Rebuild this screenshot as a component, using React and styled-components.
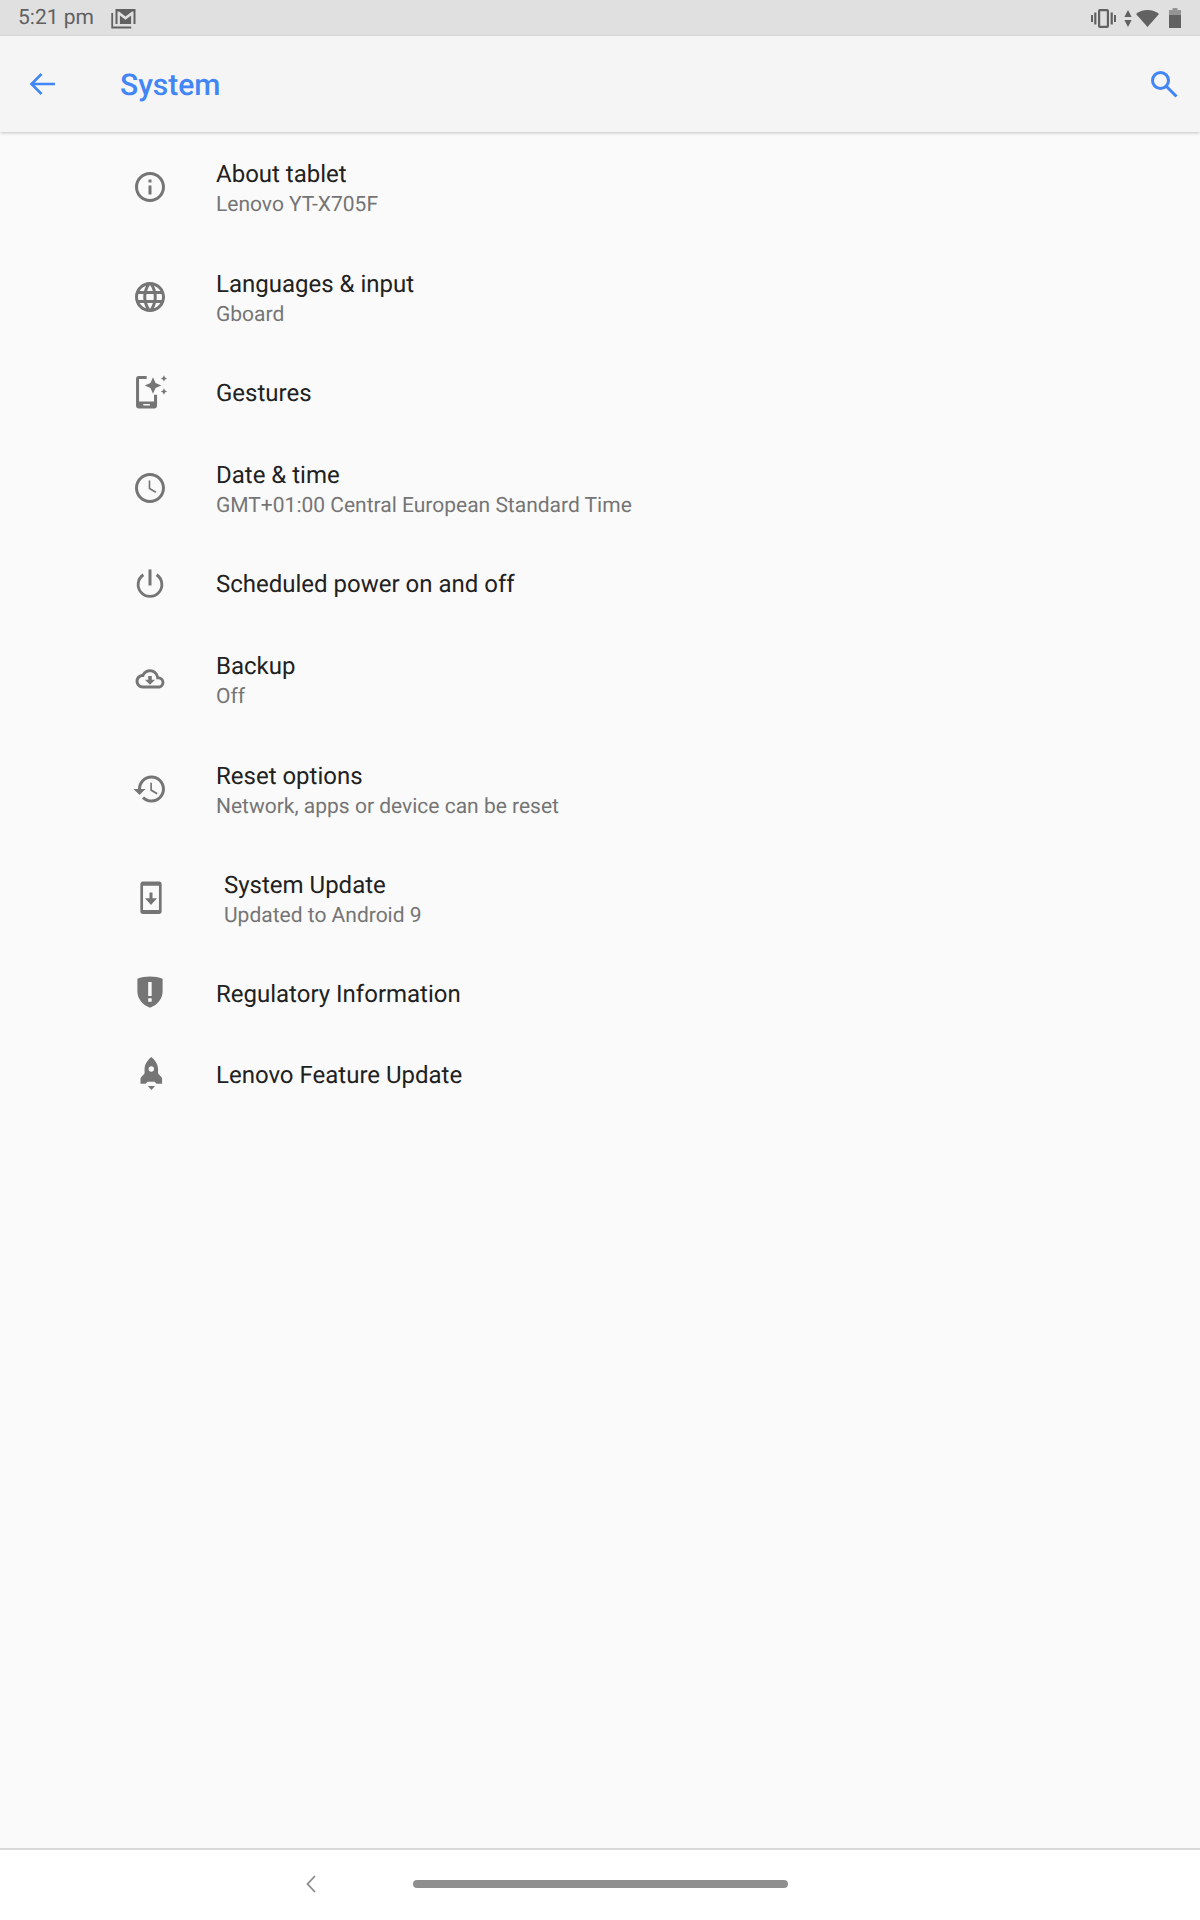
import styled, { createGlobalStyle } from 'styled-components'

const GlobalStyle = createGlobalStyle`
  html, body {
    margin: 0;
    padding: 0;
    background: #fafafa;
    font-family: Roboto, "Liberation Sans", sans-serif;
  }
`

const Page = styled.div`
  width: 1200px;
  height: 1920px;
  display: flex;
  flex-direction: column;
  background: #fafafa;
  overflow: hidden;
  text-rendering: geometricPrecision;
`

const StatusBar = styled.div`
  height: 36px;
  flex: none;
  display: flex;
  align-items: center;
  padding: 0 19px 0 18px;
  background: #e0e0e0;
  color: #616161;
`

const Clock = styled.span`
  font-size: 21px;
  line-height: 36px;
  margin-right: 17px;
`

const StatusRight = styled.div`
  margin-left: auto;
  display: flex;
  align-items: center;
`

const StatusIcon = styled.span`
  display: flex;
  margin-left: ${(p) => p.$before}px;
`

const Header = styled.header`
  height: 96px;
  flex: none;
  display: flex;
  align-items: center;
  padding: 0 22px 0 29px;
  background: #f5f5f6;
  box-shadow: 0 1px 3px rgba(0, 0, 0, 0.22);
  position: relative;
`

const Title = styled.h1`
  margin: 2px 0 0 65px;
  font-size: 30px;
  font-weight: 500;
  color: #4285f4;
`

const SearchButton = styled.div`
  margin-left: auto;
  display: flex;
`

const List = styled.main`
  flex: 1;
  display: flex;
  flex-direction: column;
`

const Row = styled.div`
  height: ${(p) => p.$height}px;
  flex: none;
  display: flex;
  align-items: center;
  padding-left: ${(p) => p.$indent}px;
`

const IconSlot = styled.div`
  width: 36px;
  height: 36px;
  flex: none;
  margin-right: ${(p) => p.$gap}px;
  color: #757575;

  svg {
    display: block;
  }
`

const Texts = styled.div`
  display: flex;
  flex-direction: column;
  padding-top: ${(p) => (p.$two ? 3 : 0)}px;
`

const RowTitle = styled.div`
  font-size: 24px;
  line-height: 32px;
  color: #212121;
`

const RowSub = styled.div`
  margin-top: 1px;
  font-size: 21px;
  line-height: 29px;
  color: #757575;
`

const NavBar = styled.nav`
  height: 72px;
  flex: none;
  display: flex;
  align-items: center;
  padding: 0 0 3px 306px;
  box-sizing: border-box;
  background: #ffffff;
  border-top: 2px solid #d9d9d9;
`

const NavPill = styled.div`
  width: 375px;
  height: 8px;
  margin-left: 97px;
  border-radius: 4px;
  background: #8f8f8f;
`

const Glyph = ({ children }) => (
  <svg width="36" height="36" viewBox="0 0 24 24" fill="currentColor">
    {children}
  </svg>
)

const InfoIcon = () => (
  <Glyph>
    <path d="M11 7h2v2h-2zm0 4h2v6h-2zm1-9C6.48 2 2 6.48 2 12s4.48 10 10 10 10-4.48 10-10S17.52 2 12 2zm0 18c-4.41 0-8-3.59-8-8s3.59-8 8-8 8 3.59 8 8-3.59 8-8 8z" />
  </Glyph>
)

const GlobeIcon = () => (
  <Glyph>
    <path d="M11.99 2C6.47 2 2 6.48 2 12s4.47 10 9.99 10C17.52 22 22 17.52 22 12S17.52 2 11.99 2zm6.93 6h-2.95c-.32-1.25-.78-2.45-1.38-3.56 1.84.63 3.37 1.91 4.33 3.56zM12 4.04c.83 1.2 1.48 2.53 1.91 3.96h-3.82c.43-1.43 1.08-2.76 1.91-3.96zM4.26 14C4.1 13.36 4 12.69 4 12s.1-1.36.26-2h3.38c-.08.66-.14 1.32-.14 2 0 .68.06 1.34.14 2H4.26zm.82 2h2.95c.32 1.25.78 2.45 1.38 3.56-1.84-.63-3.37-1.9-4.33-3.56zm2.95-8H5.08c.96-1.66 2.49-2.93 4.33-3.56C8.81 5.55 8.35 6.75 8.03 8zM12 19.96c-.83-1.2-1.48-2.53-1.91-3.96h3.82c-.43 1.43-1.08 2.76-1.91 3.96zM14.34 14H9.66c-.09-.66-.16-1.32-.16-2 0-.68.07-1.35.16-2h4.68c.09.65.16 1.32.16 2 0 .68-.07 1.34-.16 2zm.25 5.56c.6-1.11 1.06-2.31 1.38-3.56h2.95c-.96 1.65-2.49 2.93-4.33 3.56zM16.36 14c.08-.66.14-1.32.14-2 0-.68-.06-1.34-.14-2h3.38c.16.64.26 1.31.26 2s-.1 1.36-.26 2h-3.38z" />
  </Glyph>
)

const GestureIcon = () => (
  <Glyph>
    <path
      d="M4.400.6h5.400v2H4.700v15h10v-4.400h2v7.300c0 1-.8 1.800-1.800 1.800H4.500c-1 0-1.800-.8-1.800-1.800V2.400C2.700 1.400 3.400.6 4.400.6zM7.500 19.400v1h4.400v-1z"
      fillRule="evenodd"
    />
    <path d="M14 1.500l1.700 3.800 3.800 1.700-3.800 1.700L14 12.500l-1.700-3.800L8.500 7l3.800-1.700z" />
    <path d="M21.300.2l.7 1.400 1.400.7-1.400.7-.7 1.400-.7-1.400-1.400-.7 1.400-.7zM21.300 8.900l.7 1.400 1.400.7-1.400.7-.7 1.400-.7-1.400-1.400-.7 1.400-.7z" />
  </Glyph>
)

const ClockIcon = () => (
  <Glyph>
    <path d="M11.99 2C6.47 2 2 6.48 2 12s4.47 10 9.99 10C17.52 22 22 17.52 22 12S17.52 2 11.99 2zM12 20c-4.42 0-8-3.58-8-8s3.58-8 8-8 8 3.58 8 8-3.58 8-8 8z" />
    <path d="M12.200 7h-1.100v5.600l4.500 2.700.6-1-4-2.300z" />
  </Glyph>
)

const PowerIcon = () => (
  <Glyph>
    <path d="M11 2.300h2v10.700h-2z" />
    <path d="M7.600 5.800a7.900 7.900 0 1 0 8.800 0" fill="none" stroke="currentColor" strokeWidth="1.900" />
  </Glyph>
)

const CloudIcon = () => (
  <Glyph>
    <path
      d="M19.350 10.040C18.670 6.590 15.640 4 12 4 9.110 4 6.600 5.640 5.350 8.040 2.340 8.360 0 10.910 0 14c0 3.310 2.690 6 6 6h13c2.760 0 5-2.240 5-5 0-2.640-2.050-4.780-4.650-4.960zM19 17.600H6c-2.210 0-3.600-1.600-3.600-3.600S4 10.400 6 10.400h.9C7.500 8 9.500 6.400 12 6.400c3 0 5.200 2.200 5.200 5.100v.9H19c1.660 0 2.600 1.100 2.600 2.600S20.660 17.600 19 17.600z"
      transform="translate(2.400 2.300) scale(.8)"
    />
    <path d="M10.800 10h2.400v2.500h2.200L12 15.800l-3.400-3.300h2.200z" />
  </Glyph>
)

const HistoryIcon = () => (
  <Glyph>
    <path d="M13 3c-4.970 0-9 4.030-9 9H1l3.890 3.890.07.14L9 12H6c0-3.870 3.130-7 7-7s7 3.130 7 7-3.130 7-7 7c-1.930 0-3.680-.79-4.940-2.060l-1.420 1.420C8.270 19.990 10.510 21 13 21c4.970 0 9-4.030 9-9s-4.030-9-9-9z" />
    <path d="M12.200 7.800h1.100v4.600l3.800 2.300-.6 1-4.300-2.600z" />
  </Glyph>
)

const PhoneDownloadIcon = () => (
  <Glyph>
    <path
      d="M6.500.4h11c.9 0 1.600.7 1.600 1.600v18.400c0 .9-.7 1.600-1.600 1.600h-11c-.9 0-1.600-.7-1.600-1.600V2C4.900 1.100 5.600.4 6.500.4zM6.700 3.200v16.100h10.600V3.200z"
      fillRule="evenodd"
    />
    <path d="M11 7.700h2v3.800h3L12 16l-4-4.500h3z" />
  </Glyph>
)

const ShieldIcon = () => (
  <Glyph>
    <path
      d="M12 .3c3 0 6 .5 8.400 1.500v8.600c0 5.200-3.700 9-8.400 10.800-4.700-1.800-8.400-5.600-8.400-10.800V1.800C6 .8 9 .3 12 .3zM10.800 4v9.300h2.300V4zM10.800 14.800v2.400h2.300v-2.400z"
      fillRule="evenodd"
    />
  </Glyph>
)

const RocketIcon = () => (
  <Glyph>
    <path
      d="M12.200 0c2.800 2.400 4.500 5 4.500 8.200v2.800l2.200 2.300c.4.400.5.800.5 1.300v3.200h-3.700l-1.300-1.300H9.700l-1.300 1.300H5v-3.200c0-.5.100-.9.500-1.300L7.700 11V8.200C7.700 5 9.400 2.400 12.200 0zM12.200 6.200a1.800 1.800 0 1 0 0 3.600 1.800 1.800 0 0 0 0-3.600z"
      fillRule="evenodd"
    />
    <path d="M9.900 19.300h4.800L12.300 22z" />
  </Glyph>
)

const MailStackIcon = () => (
  <svg width="25" height="21" viewBox="0 0 25 21" fill="none">
    <path d="M1.200 5v14.500h19" stroke="#616161" strokeWidth="1.800" />
    <path d="M4.500 1h20v15h-20z" fill="#616161" />
    <path d="M6.500 3.600V16h2.400V7.400l5.600 4.400 5.600-4.400V16h2.400V3.600h-1.500l-6.500 5-6.500-5z" fill="#e0e0e0" />
  </svg>
)

const VibrateIcon = () => (
  <svg width="25" height="21" viewBox="0 0 25 21" fill="#616161">
    <path d="M0 7h2v7H0zM3.200 4.500h2.200v12H3.200zM19.600 4.500h2.200v12h-2.200zM23 7h2v7h-2z" />
    <path
      d="M9 1h7a2 2 0 0 1 2 2v15a2 2 0 0 1-2 2H9a2 2 0 0 1-2-2V3a2 2 0 0 1 2-2zm.2 2.200v14.600h6.600V3.200z"
      fillRule="evenodd"
    />
  </svg>
)

const DataArrowsIcon = () => (
  <svg width="8" height="17" viewBox="0 0 8 17" fill="#616161">
    <path d="M4 0l3.600 7H.4zM4 17L.4 10h7.200z" />
  </svg>
)

const WifiIcon = () => (
  <svg width="23" height="17" viewBox="0 0 23 17" fill="#616161">
    <path d="M11.500 0C7 0 3.200 1.500 0 4l11.500 13L23 4C19.800 1.500 16 0 11.500 0z" />
  </svg>
)

const BatteryIcon = () => (
  <svg width="12" height="20" viewBox="0 0 12 20" fill="#616161">
    <path d="M3.500 0h5v2H3.500z" opacity=".6" />
    <path d="M0 2h12v5H0z" opacity=".6" />
    <path d="M0 7h12v13H0z" />
  </svg>
)

const BackIcon = () => (
  <svg width="26" height="24" viewBox="0 0 26 24" fill="none" stroke="#4285f4" strokeWidth="2.600">
    <path d="M26 12H3M12.500 2L2.500 12l10 10" />
  </svg>
)

const SearchIcon = () => (
  <svg width="28" height="28" viewBox="0 0 28 28" fill="none" stroke="#4285f4" strokeWidth="3">
    <circle cx="10.500" cy="10.500" r="8" />
    <path d="M16.500 16.500L26.500 26.500" />
  </svg>
)

const ChevronIcon = () => (
  <svg width="10" height="18" viewBox="0 0 10 18" fill="none" stroke="#8a8a8a" strokeWidth="1.800">
    <path d="M9 1L1.500 9 9 17" />
  </svg>
)

const rows = [
  { icon: InfoIcon, title: 'About tablet', sub: 'Lenovo YT-X705F' },
  { icon: GlobeIcon, title: 'Languages & input', sub: 'Gboard' },
  { icon: GestureIcon, title: 'Gestures' },
  { icon: ClockIcon, title: 'Date & time', sub: 'GMT+01:00 Central European Standard Time' },
  { icon: PowerIcon, title: 'Scheduled power on and off' },
  { icon: CloudIcon, title: 'Backup', sub: 'Off' },
  { icon: HistoryIcon, title: 'Reset options', sub: 'Network, apps or device can be reset' },
  { icon: PhoneDownloadIcon, title: 'System Update', sub: 'Updated to Android 9', indent: 133, gap: 55, height: 109 },
  { icon: ShieldIcon, title: 'Regulatory Information' },
  { icon: RocketIcon, title: 'Lenovo Feature Update', indent: 133, gap: 47 },
]

const App = () => (
  <Page>
    <GlobalStyle />
    <StatusBar>
      <Clock>5:21 pm</Clock>
      <MailStackIcon />
      <StatusRight>
        <StatusIcon $before={0}><VibrateIcon /></StatusIcon>
        <StatusIcon $before={8}><DataArrowsIcon /></StatusIcon>
        <StatusIcon $before={4}><WifiIcon /></StatusIcon>
        <StatusIcon $before={10}><BatteryIcon /></StatusIcon>
      </StatusRight>
    </StatusBar>
    <Header>
      <BackIcon />
      <Title>System</Title>
      <SearchButton>
        <SearchIcon />
      </SearchButton>
    </Header>
    <List>
      {rows.map(({ icon: Icon, title, sub, indent = 132, gap = 48, height }) => (
        <Row key={title} $height={height || (sub ? 110 : 81)} $indent={indent}>
          <IconSlot $gap={gap}>
            <Icon />
          </IconSlot>
          <Texts $two={Boolean(sub)}>
            <RowTitle>{title}</RowTitle>
            {sub && <RowSub>{sub}</RowSub>}
          </Texts>
        </Row>
      ))}
    </List>
    <NavBar>
      <ChevronIcon />
      <NavPill />
    </NavBar>
  </Page>
)

export default App
